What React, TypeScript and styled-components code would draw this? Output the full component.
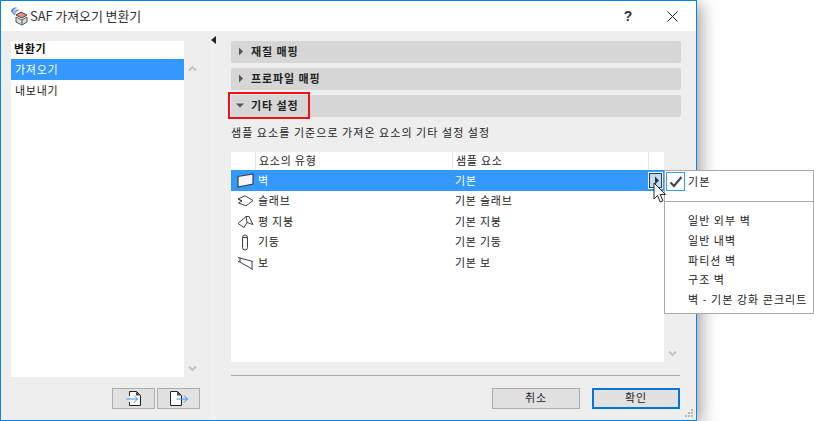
import React from "react";
import styled, { createGlobalStyle } from "styled-components";

const Global = createGlobalStyle`
  html, body { margin: 0; padding: 0; background: #fff; width: 814px; height: 421px; overflow: hidden; }
  body { font-family: "Noto Sans CJK KR", "Noto Sans", sans-serif; font-size: 11px; color: #111; }
`;
const Page = styled.div`width: 814px; height: 421px; position: relative; overflow: hidden;`;
const Win = styled.div`
  width: 697px; height: 421px; box-sizing: border-box; border: 1px solid #0a84e4;
  box-shadow: 4px 4px 16px rgba(0,0,0,.38); display: flex; flex-direction: column; background: #eeeeee;
`;
const TitleBar = styled.div`
  height: 30px; flex: none; background: #fff; display: flex; align-items: center; padding: 0 18px 0 9px; gap: 2px;
`;
const TitleText = styled.div`font-size: 13px; color: #333; flex: 1; letter-spacing: -.1px; line-height: 30px;`;
const Help = styled.div`font: bold 14px "Liberation Sans", sans-serif; color: #333; width: 14px; text-align: center; margin-right: 30px;`;
const Body = styled.div`flex: 1; display: flex; min-height: 0;`;
const LeftPane = styled.div`
  width: 210px; flex: none; box-sizing: border-box; padding: 10px 11px 10px 10px; display: flex; flex-direction: column;
`;
const ListRow = styled.div`display: flex; height: 336px; flex: none;`;
const List = styled.div`width: 173px; background: #fff; flex: none;`;
const ListHead = styled.div`height: 18px; line-height: 15px; padding-left: 3px; font-weight: 700; font-size: 11px; letter-spacing: .6px; color: #111;`;
const ListItem = styled.div<{ $on?: boolean }>`
  height: 21px; line-height: 20px; padding-left: 4px; font-size: 11px; letter-spacing: .7px;
  background: ${p => (p.$on ? "#3399ff" : "transparent")}; color: ${p => (p.$on ? "#fff" : "#222")};
`;
const ScrollCol = styled.div<{ $end?: boolean }>`
  width: 16px; flex: none; display: flex; flex-direction: column; align-items: center; padding: 24px 0 5px;
  justify-content: ${p => (p.$end ? "flex-end" : "space-between")}; box-sizing: border-box;
`;
const IconBtns = styled.div`display: flex; justify-content: flex-end; gap: 2px; margin-top: 11px;`;
const IconBtn = styled.div`
  width: 43px; height: 21px; box-sizing: border-box; background: #e1e1e1; border: 1px solid #adadad;
  display: flex; align-items: center; justify-content: center;
`;
const Splitter = styled.div`
  width: 5px; flex: none; background: #f1f1f1; display: flex; justify-content: center; padding-top: 4px; box-sizing: border-box;
`;
const RightPane = styled.div`
  flex: 1; min-width: 0; box-sizing: border-box; padding: 10px 15px 10px 15px; display: flex; flex-direction: column;
`;
const Acc = styled.div`
  height: 22px; flex: none; margin-bottom: 5px; background: #d6d6d6; border-radius: 2px; display: flex; align-items: center;
  padding: 0 0 2px 4px; box-sizing: border-box; gap: 7px; font-size: 11px; font-weight: 700; letter-spacing: .9px; color: #222; position: relative;
`;
const RedBox = styled.div`
  position: absolute; left: -3px; top: -3px; width: 82px; height: 27px; border: 2px solid #f01010; box-sizing: border-box;
`;
const Desc = styled.div`flex: none; height: 30px; line-height: 20px; letter-spacing: 1.05px; color: #222; font-size: 11px;`;
const TableRow0 = styled.div`display: flex; height: 210px; flex: none;`;
const Table = styled.div`width: 433px; background: #fff; flex: none;`;
const THead = styled.div`display: flex; height: 18px; line-height: 16px; font-size: 11px; letter-spacing: .75px; color: #222;`;
const TH = styled.div<{ $w: number }>`
  width: ${p => p.$w}px; flex: none; box-sizing: border-box; padding-left: 3px; border-left: 1px solid #e6e6e6;
  &:first-child { border-left: none; padding-left: 0; }
`;
const Row = styled.div<{ $on?: boolean }>`
  display: flex; align-items: center; height: ${p => (p.$on ? "21px" : "20.6px")}; font-size: 11px; letter-spacing: .75px;
  background: ${p => (p.$on ? "#3399ff" : "transparent")}; color: ${p => (p.$on ? "#fff" : "#222")};
`;
const IconCell = styled.div`width: 26px; flex: none; display: flex; justify-content: center; align-items: center; padding-left: 2px; box-sizing: border-box;`;
const Name = styled.div`width: 198px; flex: none; padding: 0 0 2px 1px; box-sizing: border-box; line-height: 18px;`;
const Sample = styled.div`flex: 1; padding-bottom: 2px; line-height: 18px;`;
const ArrowBtn = styled.div`
  width: 11px; height: 13px; margin-right: 2px; background: #c4dcf3; border: 1px solid #0f3f70; outline: 1px solid #fff;
  display: flex; align-items: center; justify-content: center;
`;
const Rule = styled.div`height: 1px; background: #a9a9a9; margin-top: 13px; flex: none; width: 449px;`;
const Actions = styled.div`display: flex; justify-content: flex-end; gap: 12px; margin-top: 12px; width: 449px;`;
const Btn = styled.div<{ $def?: boolean }>`
  width: 88px; height: 21px; box-sizing: border-box; background: #e1e1e1; text-align: center; font-size: 11px; letter-spacing: .8px; color: #222;
  border: ${p => (p.$def ? "2px solid #0078d7" : "1px solid #adadad")}; line-height: ${p => (p.$def ? "15px" : "17px")};
`;
const Menu = styled.div`
  position: absolute; left: 664px; top: 170px; width: 150px; height: 144px; box-sizing: border-box; background: #fff; border: 1px solid #a9a9a9;
  font-size: 11px; letter-spacing: 1.05px; color: #222; display: flex; flex-direction: column;
`;
const MenuTop = styled.div`display: flex; height: 30px; flex: none; padding: 1px 0 0 1px; box-sizing: border-box; gap: 3px;`;
const Check = styled.div`
  width: 19px; height: 19px; box-sizing: border-box; border: 1px solid #3399ff; background: #fff; display: flex; align-items: center; justify-content: center;
`;
const MenuSep = styled.div`height: 1px; background: #a9a9a9; flex: none;`;
const MenuList = styled.div`padding: 8px 0 0 23px;`;
const MenuItem = styled.div`height: 19.8px; line-height: 20px; white-space: nowrap;`;
const CheckLabel = styled.div`line-height: 18px;`;
const Grip = styled.svg`position: absolute; left: 684px; top: 408px;`;
const Cursor = styled.svg`position: absolute; left: 653px; top: 182px;`;

const Tri = ({ dir, c = "#555" }: { dir: "r" | "d" | "l"; c?: string }) => (
  <svg width="9" height="9" viewBox="0 0 9 9" style={{ flex: "none" }}>
    <path d={dir === "r" ? "M4 .5l4 4-4 4z" : dir === "d" ? "M1 2.500h8L5 6.500z" : "M7 1v8L2 5z"} fill={c} />
  </svg>
);
const Chev = ({ up }: { up?: boolean }) => (
  <svg width="9" height="7" viewBox="0 0 9 7">
    <path d={up ? "M1 5.500l3.500-3.500L8 5.500" : "M1 1.500L4.500 5 8 1.500"} fill="none" stroke="#c4c4c4" strokeWidth="2" />
  </svg>
);
const AppIcon = () => (
  <svg width="18" height="20" viewBox="0 0 18 20" style={{ flex: "none" }}>
    <path d="M1 6C1 2 5 .5 8 2 5 2 3 4 3 7z" fill="#4f7fe0" />
    <path d="M3 8C3 5 6 3 9 4 7 5 5 6 5 9z" fill="#a9b4d6" stroke="#5b6f9f" strokeWidth=".5" />
    <path d="M6 9l5-3 6 3-5 3z" fill="#e8907c" stroke="#444" />
    <path d="M6 11l6 3 5-3v5l-5 3-6-3z" fill="#dcdcdc" stroke="#555" />
    <path d="M12 14v5" stroke="#555" />
  </svg>
);
const ImportIcon = () => (
  <svg width="20" height="17" viewBox="0 0 20 17">
    <path d="M5.500 6V1.500h7l4 4v10H5.500V12" fill="#fff" stroke="#222" />
    <path d="M12 1.500l4 4h-4z" fill="#444" />
    <path d="M2.500 9h11M10 5.500L13.500 9 10 12.500" fill="none" stroke="#3f8cf5" />
  </svg>
);
const ExportIcon = () => (
  <svg width="20" height="17" viewBox="0 0 20 17">
    <path d="M1.500 1.500h7l4 4v10h-11z" fill="#fff" stroke="#222" />
    <path d="M8 1.500l4 4H8z" fill="#444" />
    <path d="M7.500 9h11M15 5.500L18.500 9 15 12.500" fill="none" stroke="#3f8cf5" />
  </svg>
);
const WallIcon = () => (
  <svg width="17" height="15" viewBox="0 0 17 15">
    <path d="M1 3.500L16 1v10L1 14z" fill="#f6f6f6" stroke="#39424e" strokeWidth="1.200" />
  </svg>
);
const SlabIcon = () => (
  <svg width="17" height="12" viewBox="0 0 17 12">
    <path d="M1 4L8 .8l8 4.700L9 10.800 1.500 8 5 6z" fill="#fff" stroke="#39424e" />
    <path d="M1 4l4 2" stroke="#39424e" />
  </svg>
);
const RoofIcon = () => (
  <svg width="17" height="14" viewBox="0 0 17 14">
    <path d="M1 8.500L9 1.500h3l4 8-6-2-3 5z" fill="#fff" stroke="#39424e" />
    <path d="M9 1.500l1 6" stroke="#39424e" />
  </svg>
);
const ColumnIcon = () => (
  <svg width="8" height="17" viewBox="0 0 8 17">
    <rect x="1.500" y="1" width="5" height="15" rx="2.500" fill="#f6f6f6" stroke="#39424e" />
    <path d="M1.500 3.500h5" stroke="#39424e" />
  </svg>
);
const BeamIcon = () => (
  <svg width="17" height="14" viewBox="0 0 17 14">
    <path d="M1 1.500l15 4M3 1.500v4.500l12 7V5" fill="none" stroke="#39424e" />
    <path d="M3 6L1 5.500M15 13l1 .5" stroke="#39424e" />
  </svg>
);

const rows = [
  { i: <WallIcon />, n: "벽", s: "기본" },
  { i: <SlabIcon />, n: "슬래브", s: "기본 슬래브" },
  { i: <RoofIcon />, n: "평 지붕", s: "기본 지붕" },
  { i: <ColumnIcon />, n: "기둥", s: "기본 기둥" },
  { i: <BeamIcon />, n: "보", s: "기본 보" },
];
const menuItems = ["일반 외부 벽", "일반 내벽", "파티션 벽", "구조 벽", "벽 - 기본 강화 콘크리트"];

export default function App() {
  return (
    <Page>
      <Global />
      <Win>
        <TitleBar>
          <AppIcon />
          <TitleText>SAF 가져오기 변환기</TitleText>
          <Help>?</Help>
          <svg width="11" height="11" viewBox="0 0 11 11"><path d="M.5.5l10 10M10.500.5l-10 10" stroke="#222" /></svg>
        </TitleBar>
        <Body>
          <LeftPane>
            <ListRow>
              <List>
                <ListHead>변환기</ListHead>
                <ListItem $on>가져오기</ListItem>
                <ListItem>내보내기</ListItem>
              </List>
              <ScrollCol><Chev up /><Chev /></ScrollCol>
            </ListRow>
            <IconBtns>
              <IconBtn><ImportIcon /></IconBtn>
              <IconBtn><ExportIcon /></IconBtn>
            </IconBtns>
          </LeftPane>
          <Splitter><Tri dir="l" c="#222" /></Splitter>
          <RightPane>
            <Acc><Tri dir="r" />재질 매핑</Acc>
            <Acc><Tri dir="r" />프로파일 매핑</Acc>
            <Acc><Tri dir="d" />기타 설정<RedBox /></Acc>
            <Desc>샘플 요소를 기준으로 가져온 요소의 기타 설정 설정</Desc>
            <TableRow0>
              <Table>
                <THead>
                  <TH $w={24} />
                  <TH $w={197}>요소의 유형</TH>
                  <TH $w={196}>샘플 요소</TH>
                  <TH $w={16} />
                </THead>
                {rows.map((r, i) => (
                  <Row key={r.n} $on={i === 0}>
                    <IconCell>{r.i}</IconCell>
                    <Name>{r.n}</Name>
                    <Sample>{r.s}</Sample>
                    {i === 0 && <ArrowBtn><Tri dir="r" c="#333" /></ArrowBtn>}
                  </Row>
                ))}
              </Table>
              <ScrollCol $end><Chev /></ScrollCol>
            </TableRow0>
            <Rule />
            <Actions>
              <Btn>취소</Btn>
              <Btn $def>확인</Btn>
            </Actions>
          </RightPane>
        </Body>
      </Win>
      <Grip width="10" height="10" viewBox="0 0 10 10">
        <path d="M7 1h2v2H7zM4 4h2v2H4zM7 4h2v2H7zM1 7h2v2H1zM4 7h2v2H4zM7 7h2v2H7z" fill="#b8b8b8" />
      </Grip>
      <Menu>
        <MenuTop>
          <Check>
            <svg width="14" height="12" viewBox="0 0 14 12"><path d="M1.500 6.500L5 10l7.500-9" fill="none" stroke="#39424e" strokeWidth="2" /></svg>
          </Check>
          <CheckLabel>기본</CheckLabel>
        </MenuTop>
        <MenuSep />
        <MenuList>
          {menuItems.map(m => <MenuItem key={m}>{m}</MenuItem>)}
        </MenuList>
      </Menu>
      <Cursor width="14" height="21" viewBox="0 0 14 21">
        <path d="M1 1v16l3.500-3.500 2.800 6.500 2.700-1.200-2.800-6.300H12.500z" fill="#fff" stroke="#222" />
      </Cursor>
    </Page>
  );
}
